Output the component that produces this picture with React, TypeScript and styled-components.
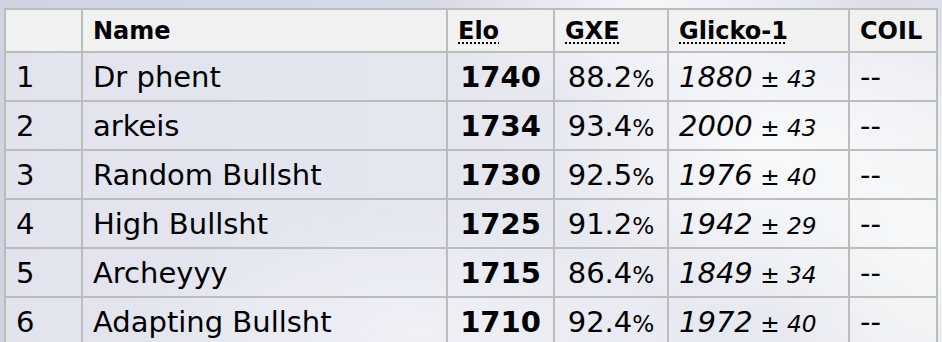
import React from "react";
import styled, { createGlobalStyle } from "styled-components";

const Global = createGlobalStyle`
  html, body {
    margin: 0;
    padding: 0;
  }
  body {
    width: 942px;
    height: 342px;
    overflow: hidden;
    font-family: "DejaVu Sans", Verdana, sans-serif;
    color: #000;
    background:
      radial-gradient(ellipse 230px 170px at 770px 150px, rgba(250, 252, 252, 0.95), rgba(250, 252, 252, 0) 100%),
      radial-gradient(ellipse 220px 110px at 650px 0px, rgba(250, 250, 252, 0.9), rgba(250, 250, 252, 0) 100%),
      radial-gradient(ellipse 170px 220px at 930px 250px, rgba(244, 248, 244, 0.95), rgba(244, 248, 244, 0) 100%),
      radial-gradient(ellipse 300px 120px at 420px 330px, rgba(236, 238, 246, 0.8), rgba(236, 238, 246, 0) 100%),
      linear-gradient(90deg, #d0d3e2 0%, #d6d9e6 45%, #dcdfe9 100%);
  }
`;

const Page = styled.main`
  padding: 8px 4px 0;
`;

const Table = styled.table`
  width: 934px;
  table-layout: fixed;
  border-collapse: collapse;
`;

const HeadCell = styled.th`
  background: rgba(241, 241, 241, 0.96);
  border: 2px solid #bcbcbc;
  padding: 2px 10px 0;
  height: 39px;
  line-height: 39px;
  font-size: 24px;
  font-weight: bold;
  text-align: left;
  white-space: nowrap;
  overflow: hidden;
`;

const Abbr = styled.abbr`
  text-decoration: underline dotted;
  text-decoration-thickness: 2px;
  text-underline-offset: 3px;
  cursor: help;
`;

const Cell = styled.td<{ $align?: "left" | "center" }>`
  background: rgba(250, 251, 253, 0.42);
  border: 2px solid #bcbcbc;
  padding: 1px 10px 0;
  height: 46px;
  line-height: 46px;
  font-size: 29px;
  text-align: ${(p) => p.$align ?? "left"};
  white-space: nowrap;
  overflow: hidden;
`;

const Small = styled.small`
  font-size: 0.8em;
  line-height: 1;
`;

const Rating = styled.strong`
  font-weight: bold;
`;

const Glicko = styled.em`
  font-style: italic;
`;

type Row = {
  rank: number;
  name: string;
  elo: number;
  gxe: string;
  glicko: number;
  dev: number;
};

const rows: Row[] = [
  { rank: 1, name: "Dr phent", elo: 1740, gxe: "88.2", glicko: 1880, dev: 43 },
  { rank: 2, name: "arkeis", elo: 1734, gxe: "93.4", glicko: 2000, dev: 43 },
  { rank: 3, name: "Random Bullsht", elo: 1730, gxe: "92.5", glicko: 1976, dev: 40 },
  { rank: 4, name: "High Bullsht", elo: 1725, gxe: "91.2", glicko: 1942, dev: 29 },
  { rank: 5, name: "Archeyyy", elo: 1715, gxe: "86.4", glicko: 1849, dev: 34 },
  { rank: 6, name: "Adapting Bullsht", elo: 1710, gxe: "92.4", glicko: 1972, dev: 40 },
];

const widths = [77, 365, 107, 114, 181, 88];

export default function App() {
  return (
    <>
      <Global />
      <Page>
        <Table>
          <colgroup>
            {widths.map((w, i) => (
              <col key={i} style={{ width: w }} />
            ))}
          </colgroup>
          <thead>
            <tr>
              <HeadCell></HeadCell>
              <HeadCell>Name</HeadCell>
              <HeadCell>
                <Abbr title="Elo rating">Elo</Abbr>
              </HeadCell>
              <HeadCell>
                <Abbr title="user's percentage chance of winning a random battle">GXE</Abbr>
              </HeadCell>
              <HeadCell>
                <Abbr title="Glicko-1 rating: rating ± deviation">Glicko-1</Abbr>
              </HeadCell>
              <HeadCell>COIL</HeadCell>
            </tr>
          </thead>
          <tbody>
            {rows.map((r) => (
              <tr key={r.rank}>
                <Cell>{r.rank}</Cell>
                <Cell>{r.name}</Cell>
                <Cell $align="center">
                  <Rating>{r.elo}</Rating>
                </Cell>
                <Cell $align="center">
                  {r.gxe}
                  <Small>%</Small>
                </Cell>
                <Cell>
                  <Glicko>
                    {r.glicko}
                    <Small> ± {r.dev}</Small>
                  </Glicko>
                </Cell>
                <Cell>--</Cell>
              </tr>
            ))}
          </tbody>
        </Table>
      </Page>
    </>
  );
}
